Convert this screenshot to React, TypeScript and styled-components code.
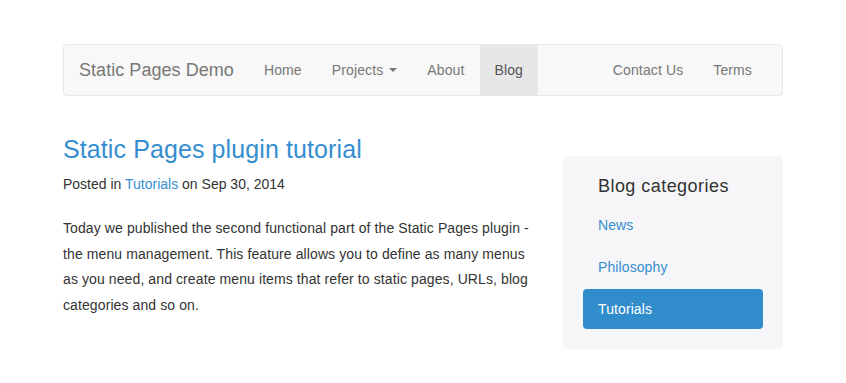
import React from "react";
import styled, { createGlobalStyle } from "styled-components";

const Global = createGlobalStyle`
  * { box-sizing: border-box; }
  body {
    margin: 0;
    background: #fff;
    font-family: "Helvetica Neue", "Liberation Sans", Arial, sans-serif;
    font-size: 14px;
    color: #333;
  }
  a { text-decoration: none; }
`;

const Container = styled.div`
  width: 750px;
  margin: 0 auto;
  padding: 44px 15px 0;
`;

const Navbar = styled.nav`
  display: flex;
  align-items: stretch;
  height: 52px;
  background: #f8f8f8;
  border: 1px solid #e7e7e7;
  border-radius: 4px;
  padding: 0 15px;
`;

const Brand = styled.a`
  display: flex;
  align-items: center;
  font-size: 18px;
  color: #777;
  padding-right: 15px;
  letter-spacing: 0.05px;
`;

const NavList = styled.ul<{ $right?: boolean }>`
  display: flex;
  list-style: none;
  margin: 0;
  padding: 0;
  margin-left: ${(p) => (p.$right ? "auto" : "0")};
`;

const NavLink = styled.a<{ $active?: boolean }>`
  display: flex;
  align-items: center;
  height: 100%;
  padding: 0 15px;
  font-size: 14px;
  letter-spacing: 0.12px;
  color: ${(p) => (p.$active ? "#555" : "#777")};
  background: ${(p) => (p.$active ? "#e7e7e7" : "transparent")};
`;

const Caret = styled.span`
  display: inline-block;
  width: 0;
  height: 0;
  margin-left: 6px;
  border-top: 4px solid #777;
  border-left: 4px solid transparent;
  border-right: 4px solid transparent;
`;

const Row = styled.div`
  display: grid;
  grid-template-columns: 470px 220px;
  column-gap: 30px;
  margin-top: 20px;
`;

const Main = styled.article``;

const Title = styled.h3`
  margin: 20px 0 10px;
  font-size: 25px;
  font-weight: 500;
  line-height: 26.4px;
  letter-spacing: 0.1px;
  color: #358ecf;
`;

const Meta = styled.p`
  margin: 0 0 19px;
  line-height: 25px;
  font-size: 14px;
  color: #333;
`;

const Link = styled.a`
  color: #358ecf;
`;

const Body = styled.p`
  margin: 0;
  line-height: 25.4px;
  font-size: 14px;
  letter-spacing: 0.1px;
  color: #333;
`;

const Sidebar = styled.aside`
  margin-top: 40px;
  background: #f6f6f8;
  border-radius: 4px;
  padding: 10px 20px 20px;
  align-self: start;
`;

const SideTitle = styled.h4`
  margin: 10px 0 9px;
  padding-left: 15px;
  font-size: 18px;
  font-weight: 500;
  line-height: 20px;
  letter-spacing: 0.45px;
  color: #333;
`;

const Pills = styled.ul`
  list-style: none;
  margin: 0;
  padding: 0;
  display: flex;
  flex-direction: column;
  gap: 2px;
`;

const Pill = styled.a<{ $active?: boolean }>`
  display: block;
  padding: 10px 15px;
  line-height: 20px;
  font-size: 14px;
  letter-spacing: 0.1px;
  border-radius: 4px;
  color: ${(p) => (p.$active ? "#fff" : "#358ecf")};
  background: ${(p) => (p.$active ? "#318ccc" : "transparent")};
`;

export default function App() {
  return (
    <>
      <Global />
      <Container>
        <Navbar>
          <Brand href="#">Static Pages Demo</Brand>
          <NavList>
            <li><NavLink href="#">Home</NavLink></li>
            <li><NavLink href="#">Projects<Caret /></NavLink></li>
            <li><NavLink href="#">About</NavLink></li>
            <li><NavLink href="#" $active>Blog</NavLink></li>
          </NavList>
          <NavList $right>
            <li><NavLink href="#">Contact Us</NavLink></li>
            <li><NavLink href="#">Terms</NavLink></li>
          </NavList>
        </Navbar>
        <Row>
          <Main>
            <Title>Static Pages plugin tutorial</Title>
            <Meta>
              Posted in <Link href="#">Tutorials</Link> on Sep 30, 2014
            </Meta>
            <Body>
              Today we published the second functional part of the Static Pages plugin -
              the menu management. This feature allows you to define as many menus as you
              need, and create menu items that refer to static pages, URLs, blog categories
              and so on.
            </Body>
          </Main>
          <Sidebar>
            <SideTitle>Blog categories</SideTitle>
            <Pills>
              <li><Pill href="#">News</Pill></li>
              <li><Pill href="#">Philosophy</Pill></li>
              <li><Pill href="#" $active>Tutorials</Pill></li>
            </Pills>
          </Sidebar>
        </Row>
      </Container>
    </>
  );
}
